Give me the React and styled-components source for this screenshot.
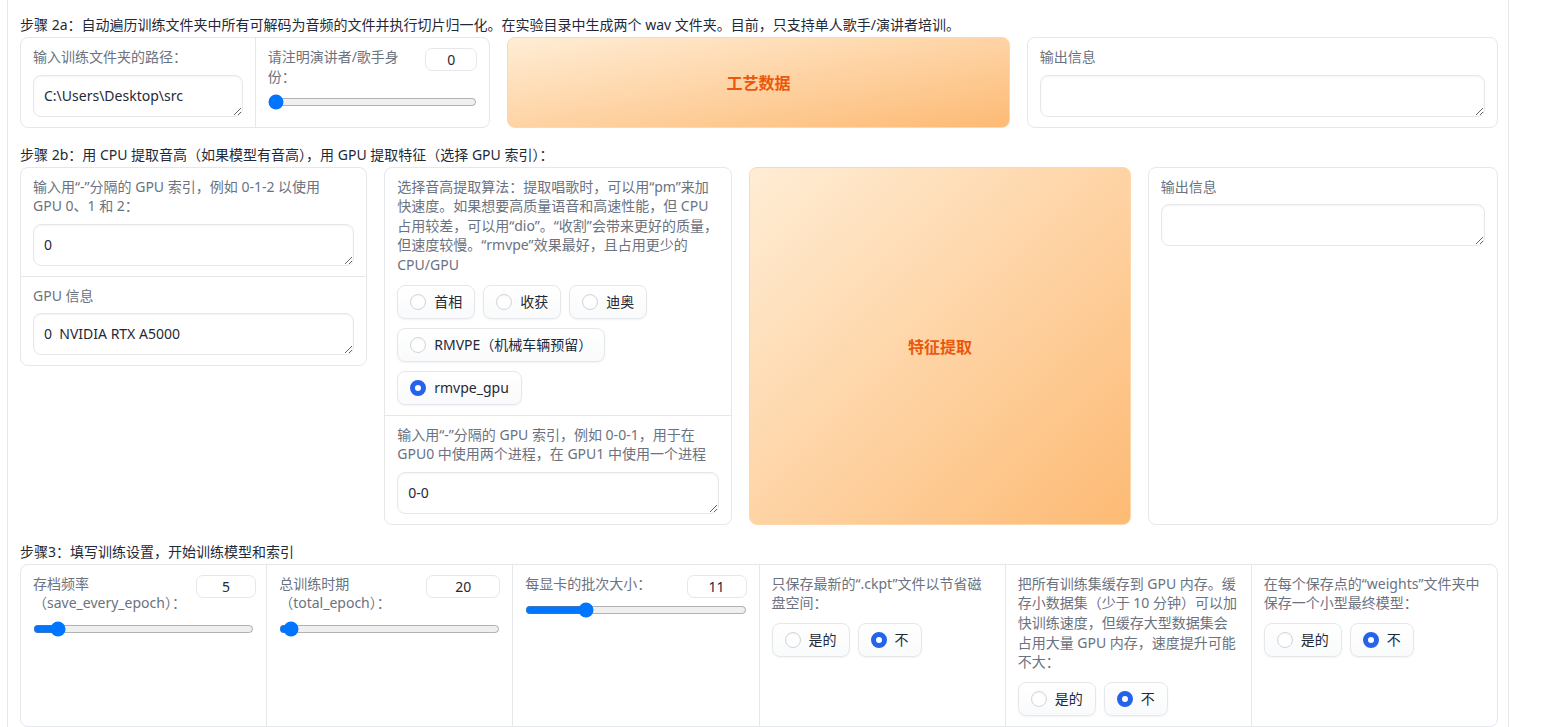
import React from 'react';
import styled, { createGlobalStyle } from 'styled-components';

const Global = createGlobalStyle`
  html, body { margin: 0; padding: 0; background: #fff; overflow: hidden; }
  body {
    font-family: "Noto Sans", "Noto Sans CJK SC", sans-serif;
    font-size: 14px;
    color: #1f2937;
  }
  * { box-sizing: border-box; }
`;

const Page = styled.div`
  margin-left: 7px;
  width: 1502px;
  min-height: 727px;
  border-left: 1px solid #e5e7eb;
  border-right: 1px solid #e5e7eb;
  padding: 14px 10px 0 12px;
  display: flex;
  flex-direction: column;
  gap: 17px;
`;

const Section = styled.section`
  display: flex;
  flex-direction: column;
  gap: 2px;
`;

const StepTitle = styled.div`
  font-size: 14px;
  line-height: 20px;
  color: #1f2937;
  padding-top: ${(p) => p.$pt || 0}px;
`;

const Row = styled.div`
  display: grid;
  grid-template-columns: ${(p) => p.$cols};
  gap: 17px;
  align-items: stretch;
`;

const Block = styled.div`
  border: 1px solid #e5e7eb;
  border-radius: 8px;
  background: #fff;
  padding: 9px 12px 10px;
  display: flex;
  flex-direction: column;
  gap: 8px;
`;

const Group = styled.div`
  border: 1px solid #e5e7eb;
  border-radius: 8px;
  background: #e5e7eb;
  overflow: hidden;
  display: grid;
  grid-template-columns: ${(p) => p.$cols || '1fr'};
  grid-auto-rows: ${(p) => p.$rows || 'auto'};
  grid-template-rows: ${(p) => p.$rows || 'none'};
  gap: 1px;
`;

const Cell = styled.div`
  background: #fff;
  padding: 9px 12px 10px;
  display: flex;
  flex-direction: column;
  gap: 8px;
  min-width: 0;
`;

const Label = styled.div`
  color: #6b7280;
  font-size: 14px;
  line-height: 1.4;
`;

const TextArea = styled.textarea`
  display: block;
  width: 100%;
  height: 42px;
  padding: 10px;
  border: 1px solid #e5e7eb;
  border-radius: 8px;
  box-shadow: inset 0 1px 2px rgba(0, 0, 0, 0.05);
  font-family: inherit;
  font-size: 14px;
  line-height: 20px;
  color: #1f2937;
  resize: vertical;
  outline: none;
  background: #fff;
`;

const SliderHead = styled.div`
  display: flex;
  align-items: flex-start;
  justify-content: space-between;
  gap: 10px;
`;

const NumberBox = styled.input`
  flex-shrink: 0;
  width: ${(p) => p.$w}px;
  height: 23px;
  margin-top: 1px;
  margin-bottom: -4px;
  border: 1px solid #e5e7eb;
  border-radius: 7px;
  text-align: center;
  font-family: inherit;
  font-size: 14px;
  color: #1f2937;
  padding: 0 4px;
  outline: none;
  background: #fff;
`;

const Range = styled.input`
  display: block;
  width: 100%;
  height: 16px;
  margin: 0;
`;

const RadioGroup = styled.div`
  display: flex;
  flex-wrap: wrap;
  gap: 9px 8px;
  margin-top: 2px;
`;

const RadioItem = styled.label`
  display: inline-flex;
  align-items: center;
  gap: 8px;
  padding: 6px 12px;
  border: 1px solid #e5e7eb;
  border-radius: 8px;
  background: linear-gradient(to bottom, #ffffff, #f9fafb);
  box-shadow: 0 1px 2px rgba(0, 0, 0, 0.05);
  color: #1f2937;
  font-size: 14px;
  line-height: 20px;
`;

const Dot = styled.span`
  width: 16px;
  height: 16px;
  border-radius: 50%;
  background: #fff;
  border: ${(p) => (p.$on ? '5px solid #2563eb' : '1px solid #d1d5db')};
  box-shadow: ${(p) => (p.$on ? 'none' : 'inset 0 1px 2px rgba(0,0,0,0.04)')};
  flex-shrink: 0;
`;

const ActionButton = styled.button`
  border: 1px solid #fed7aa;
  border-radius: 8px;
  background: linear-gradient(to bottom right, #ffedd5, #fdba74);
  color: #ea580c;
  font-family: inherit;
  font-size: 16px;
  font-weight: 600;
  cursor: pointer;
`;

const StepCol = styled.div`
  display: flex;
  flex-direction: column;
  align-items: stretch;
  justify-content: flex-start;
`;

function Radios({ options, selected }) {
  return (
    <RadioGroup>
      {options.map((o) => (
        <RadioItem key={o}>
          <Dot $on={o === selected} />
          <span>{o}</span>
        </RadioItem>
      ))}
    </RadioGroup>
  );
}

function Slider({ label, value, min, max, w }) {
  return (
    <>
      <SliderHead>
        <Label>{label}</Label>
        <NumberBox $w={w} type="text" defaultValue={value} />
      </SliderHead>
      <Range type="range" min={min} max={max} defaultValue={value} />
    </>
  );
}

export default function App() {
  return (
    <>
      <Global />
      <Page>
        <Section>
          <StepTitle $pt={1}>
            步骤 2a：自动遍历训练文件夹中所有可解码为音频的文件并执行切片归一化。在实验目录中生成两个 wav 文件夹。目前，只支持单人歌手/演讲者培训。
          </StepTitle>
          <Row $cols="470fr 502fr 471fr">
            <Group $cols="1fr 1fr">
              <Cell>
                <Label>输入训练文件夹的路径：</Label>
                <TextArea defaultValue={'C:\\Users\\Desktop\\src'} />
              </Cell>
              <Cell>
                <Slider
                  label={<>请注明演讲者/歌手身<br />份：</>}
                  value={0}
                  min={0}
                  max={4}
                  w={52}
                />
              </Cell>
            </Group>
            <ActionButton>工艺数据</ActionButton>
            <Block>
              <Label>输出信息</Label>
              <TextArea defaultValue="" />
            </Block>
          </Row>
        </Section>

        <Section>
          <StepTitle>
            步骤 2b：用 CPU 提取音高（如果模型有音高），用 GPU 提取特征（选择 GPU 索引）：
          </StepTitle>
          <Row $cols="347fr 348fr 381fr 350fr">
            <StepCol>
              <Group>
                <Cell>
                  <Label>
                    输入用“-”分隔的 GPU 索引，例如 0-1-2 以使用<br />GPU 0、1 和 2：
                  </Label>
                  <TextArea defaultValue="0" />
                </Cell>
                <Cell>
                  <Label>GPU 信息</Label>
                  <TextArea defaultValue="0  NVIDIA RTX A5000" />
                </Cell>
              </Group>
            </StepCol>
            <Group $rows="auto 1fr">
              <Cell>
                <Label>
                  选择音高提取算法：提取唱歌时，可以用“pm”来加<br />
                  快速度。如果想要高质量语音和高速性能，但 CPU<br />
                  占用较差，可以用“dio”。“收割”会带来更好的质量，<br />
                  但速度较慢。“rmvpe”效果最好，且占用更少的<br />
                  CPU/GPU
                </Label>
                <Radios
                  options={['首相', '收获', '迪奥', 'RMVPE（机械车辆预留）', 'rmvpe_gpu']}
                  selected="rmvpe_gpu"
                />
              </Cell>
              <Cell>
                <Label>
                  输入用“-”分隔的 GPU 索引，例如 0-0-1，用于在<br />
                  GPU0 中使用两个进程，在 GPU1 中使用一个进程
                </Label>
                <TextArea defaultValue="0-0" />
              </Cell>
            </Group>
            <ActionButton>特征提取</ActionButton>
            <Block>
              <Label>输出信息</Label>
              <TextArea defaultValue="" />
            </Block>
          </Row>
        </Section>

        <Section>
          <StepTitle>步骤3：填写训练设置，开始训练模型和索引</StepTitle>
          <Group $cols="repeat(6, 1fr)">
            <Cell>
              <Slider
                label={<>存档频率<br />（save_every_epoch）：</>}
                value={5}
                min={1}
                max={50}
                w={60}
              />
            </Cell>
            <Cell>
              <Slider
                label={<>总训练时期<br />（total_epoch）：</>}
                value={20}
                min={2}
                max={1000}
                w={74}
              />
            </Cell>
            <Cell>
              <Slider label="每显卡的批次大小：" value={11} min={1} max={40} w={60} />
            </Cell>
            <Cell>
              <Label>
                只保存最新的“.ckpt”文件以节省磁<br />盘空间：
              </Label>
              <Radios options={['是的', '不']} selected="不" />
            </Cell>
            <Cell>
              <Label>
                把所有训练集缓存到 GPU 内存。缓<br />
                存小数据集（少于 10 分钟）可以加<br />
                快训练速度，但缓存大型数据集会<br />
                占用大量 GPU 内存，速度提升可能<br />
                不大：
              </Label>
              <Radios options={['是的', '不']} selected="不" />
            </Cell>
            <Cell>
              <Label>
                在每个保存点的“weights”文件夹中<br />保存一个小型最终模型：
              </Label>
              <Radios options={['是的', '不']} selected="不" />
            </Cell>
          </Group>
        </Section>
      </Page>
    </>
  );
}
